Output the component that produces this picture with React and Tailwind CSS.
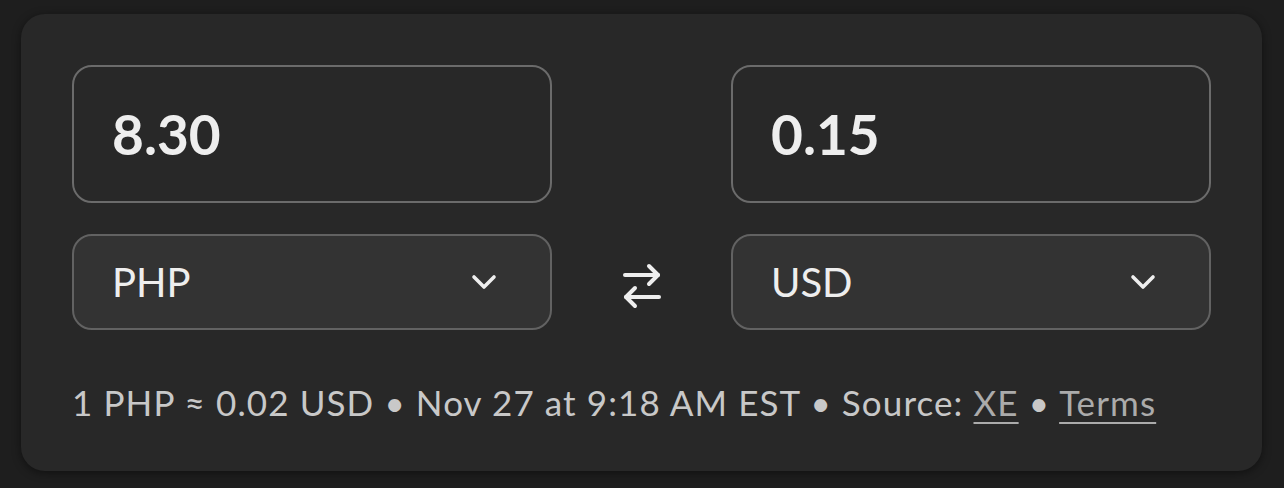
import React, { useState } from "react";

/* ================= ICONS ================= */
function SwapIcon() {
  return (
    <svg
      width="40"
      height="46"
      viewBox="0 0 40 46"
      fill="none"
      stroke="#eeeeee"
      strokeWidth="4"
      strokeLinecap="round"
      strokeLinejoin="round"
    >
      <path d="M27 3 36 12 27 21" />
      <path d="M36 12H3" />
      <path d="M13 25 4 34 13 43" />
      <path d="M4 34H37" />
    </svg>
  );
}

function Chevron() {
  return (
    <svg
      width="26"
      height="16"
      viewBox="0 0 26 16"
      fill="none"
      stroke="#eeeeee"
      strokeWidth="3.6"
      strokeLinecap="round"
      strokeLinejoin="round"
    >
      <path d="M3 3 13 13 23 3" />
    </svg>
  );
}

/* ================= PARTS ================= */
function AmountBox({ value }) {
  return (
    <div className="h-[138px] rounded-[20px] border-2 border-[#6b6b6b] flex items-center pl-[38px]">
      <span className="text-[55px] font-bold text-[#eeeeee] leading-none">
        {value}
      </span>
    </div>
  );
}

function CurrencySelect({ code }) {
  return (
    <div className="h-[96px] rounded-[20px] border-2 border-[#626262] bg-[#333333] flex items-center justify-between pl-[38px] pr-[53px]">
      <span className="text-[40px] text-[#eeeeee] leading-none">{code}</span>
      <Chevron />
    </div>
  );
}

export default function App() {
  const [from] = useState({ amount: "8.30", code: "PHP" });
  const [to] = useState({ amount: "0.15", code: "USD" });

  return (
    <div
      className="min-h-[488px] bg-[#1e1e1e] pt-[14px] pl-[21px] pr-[22px] pb-[19px]"
      style={{ fontFamily: "Lato, 'Noto Sans', sans-serif" }}
    >
      {/* CARD */}
      <div className="bg-[#282828] rounded-[24px] shadow-[0_2px_10px_rgba(0,0,0,0.45)] px-[51px] pt-[51px] pb-[49px]">
        <div className="grid grid-cols-[480px_1fr_480px] gap-y-[31px]">
          <AmountBox value={from.amount} />
          <div />
          <AmountBox value={to.amount} />

          <CurrencySelect code={from.code} />
          <div className="flex items-center justify-center pt-[7px]">
            <SwapIcon />
          </div>
          <CurrencySelect code={to.code} />
        </div>

        {/* RATE LINE */}
        <div className="mt-[52px] text-[35px] leading-[40px] tracking-[1.1px] text-[#c8c8c8] whitespace-nowrap">
          1 PHP ≈ 0.02 USD • Nov 27 at 9:18 AM EST • Source:{" "}
          <a className="underline decoration-2 underline-offset-[6px] text-[#ababab]">XE</a>
          {" "}•{" "}
          <a className="underline decoration-2 underline-offset-[6px] text-[#ababab]">Terms</a>
        </div>
      </div>
    </div>
  );
}
